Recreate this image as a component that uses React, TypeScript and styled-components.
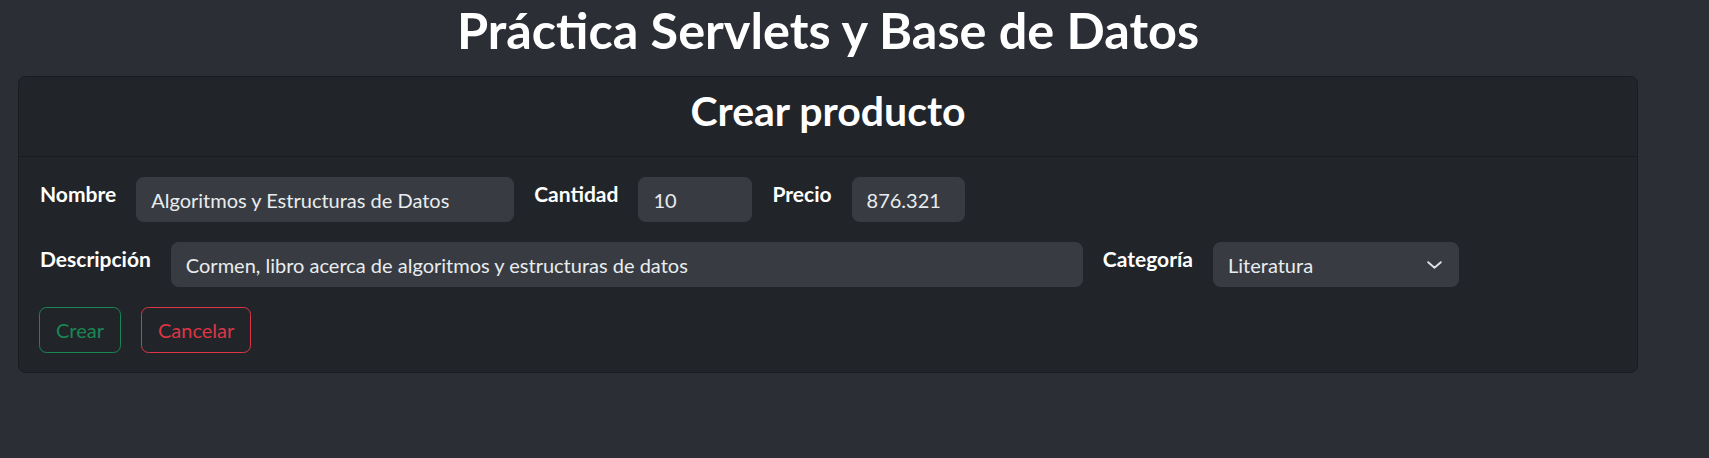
import React from "react";
import styled, { createGlobalStyle } from "styled-components";

const GlobalStyle = createGlobalStyle`
  * { box-sizing: border-box; }
  html, body { margin: 0; padding: 0; }
  body {
    background: #2b2f35;
    color: #dee2e6;
    font-family: Lato, "Open Sans", sans-serif;
    font-size: 20px;
    line-height: 1.5;
  }
`;

const Page = styled.main`
  width: 1638px;
  padding-left: 18px;
`;

const Title = styled.h1`
  margin: 0 0 16px;
  font-size: 50.4px;
  font-weight: 700;
  line-height: 60px;
  color: #ffffff;
  text-align: center;
`;

const Card = styled.section`
  background: #212529;
  border: 1px solid #1a1d20;
  border-radius: 7.5px;
  overflow: hidden;
`;

const CardHeader = styled.header`
  padding: 9px 20px 11px;
  border-bottom: 1px solid #1a1d20;
  background: #212428;
`;

const CardTitle = styled.h2`
  margin: 0 0 10px;
  font-size: 41px;
  font-weight: 700;
  line-height: 1.2;
  color: #ffffff;
  text-align: center;
`;

const CardBody = styled.form`
  padding: 20px 20px 19px;
  display: flex;
  flex-direction: column;
  gap: 20px;
`;

const FieldRow = styled.div`
  display: flex;
  align-items: flex-start;
  gap: 20px;
  padding-left: 1px;
`;

const Label = styled.label`
  padding-top: 2px;
  font-size: 21px;
  font-weight: 700;
  line-height: 30px;
  color: #ffffff;
  white-space: nowrap;
`;

const TextInput = styled.input<{ $w: number }>`
  width: ${(p) => p.$w}px;
  height: 45px;
  padding: 0 14px;
  border: 1px solid #383c42;
  border-radius: 7.5px;
  background: #383c42;
  color: #e9ecef;
  font-family: inherit;
  font-size: 20px;
  line-height: 30px;
  outline: none;
`;

const SelectWrap = styled.div<{ $w: number }>`
  display: grid;
  align-items: center;
  width: ${(p) => p.$w}px;
  height: 45px;
  & > * { grid-area: 1 / 1; }
`;

const Select = styled.select`
  appearance: none;
  width: 100%;
  height: 45px;
  padding: 0 40px 0 14px;
  border: 1px solid #383c42;
  border-radius: 7.5px;
  background: #383c42;
  color: #e9ecef;
  font-family: inherit;
  font-size: 20px;
  line-height: 30px;
  outline: none;
`;

const Chevron = styled.svg`
  justify-self: end;
  margin-right: 17px;
  pointer-events: none;
`;

const Actions = styled.div`
  display: flex;
  gap: 20px;
`;

const OutlineButton = styled.button<{ $color: string }>`
  height: 46px;
  padding: 0 16px;
  border: 1px solid ${(p) => p.$color};
  border-radius: 7.5px;
  background: transparent;
  color: ${(p) => p.$color};
  font-family: inherit;
  font-size: 20px;
  line-height: 30px;
  cursor: pointer;
`;

export default function App() {
  return (
    <>
      <GlobalStyle />
      <Page>
        <Title>Práctica Servlets y Base de Datos</Title>
        <Card>
          <CardHeader>
            <CardTitle>Crear producto</CardTitle>
          </CardHeader>
          <CardBody onSubmit={(e) => e.preventDefault()}>
            <FieldRow>
              <Label htmlFor="nombre">Nombre</Label>
              <TextInput id="nombre" $w={378} readOnly value="Algoritmos y Estructuras de Datos" />
              <Label htmlFor="cantidad">Cantidad</Label>
              <TextInput id="cantidad" $w={114} readOnly value="10" />
              <Label htmlFor="precio">Precio</Label>
              <TextInput id="precio" $w={113} readOnly value="876.321" />
            </FieldRow>
            <FieldRow>
              <Label htmlFor="descripcion">Descripción</Label>
              <TextInput
                id="descripcion"
                $w={912}
                readOnly
                value="Cormen, libro acerca de algoritmos y estructuras de datos"
              />
              <Label htmlFor="categoria">Categoría</Label>
              <SelectWrap $w={246}>
                <Select id="categoria" defaultValue="Literatura">
                  <option>Literatura</option>
                  <option>Ciencia</option>
                  <option>Tecnología</option>
                </Select>
                <Chevron width="15" height="8" viewBox="0 0 15 8" fill="none">
                  <path d="M1.2 1.2 L7.5 6.8 L13.8 1.2" stroke="#dee2e6" strokeWidth="1.9" strokeLinecap="round" strokeLinejoin="round" />
                </Chevron>
              </SelectWrap>
            </FieldRow>
            <Actions>
              <OutlineButton type="submit" $color="#198754">Crear</OutlineButton>
              <OutlineButton type="button" $color="#dc3545">Cancelar</OutlineButton>
            </Actions>
          </CardBody>
        </Card>
      </Page>
    </>
  );
}
